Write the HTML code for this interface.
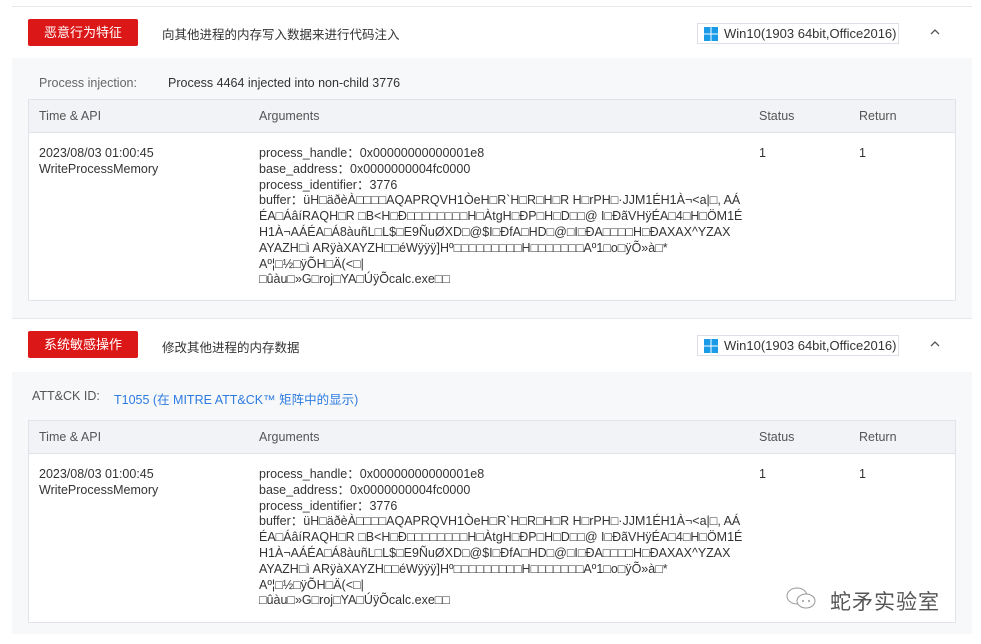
<!DOCTYPE html>
<html><head><meta charset="utf-8"><style>
*{margin:0;padding:0;box-sizing:border-box}
body{width:981px;height:644px;background:#fff;font-family:"Liberation Sans","Noto Sans CJK SC",sans-serif;color:#333;font-size:12.5px;position:relative;overflow:hidden}
.abs{position:absolute}
.line{position:absolute;left:12px;width:960px;height:1px;background:#e6e8ec}
.btn{position:absolute;left:28px;width:110px;height:27px;background:#dc1717;color:#fff;font-size:13px;text-align:center;line-height:27px;border-radius:2px}
.desc{position:absolute;left:162px;font-size:12.5px;color:#333}
.win{position:absolute;left:697px;width:202px;height:21px;border:1px solid #dcdfe6;font-size:13px;line-height:19px;padding-left:26px;color:#333}
.win svg{position:absolute;left:6px;top:3px}
.chev{position:absolute;left:930px;width:10px;height:10px}
.gray{position:absolute;left:12px;width:960px;background:#f7f8fa}
.tbl{position:absolute;left:28px;width:928px;background:#fff;border:1px solid #e1e3e8}
.th{height:33px;background:#f2f3f7;border-bottom:1px solid #e1e3e8;position:relative;color:#555}
.th span,.td span{position:absolute}
.th span{top:9px}
.td{position:relative}
.args{line-height:15.8px;white-space:pre}
.b{font-family:"DejaVu Sans",sans-serif;font-size:9px;letter-spacing:-0.5px}
</style></head><body>
<div class="line" style="top:6px"></div>

<div class="btn" style="top:19px">恶意行为特征</div>
<div class="desc" style="top:24px">向其他进程的内存写入数据来进行代码注入</div>
<div class="win" style="top:23px"><svg width="14" height="14" viewBox="0 0 14 14"><rect x="0" y="0" width="6.5" height="6.5" fill="#1a9be8"/><rect x="7.5" y="0" width="6.5" height="6.5" fill="#1a9be8"/><rect x="0" y="7.5" width="6.5" height="6.5" fill="#1a9be8"/><rect x="7.5" y="7.5" width="6.5" height="6.5" fill="#1a9be8"/></svg>Win10(1903 64bit,Office2016)</div>
<svg class="chev" style="top:27px" viewBox="0 0 10 10"><path d="M1 7 L5 3 L9 7" stroke="#555" stroke-width="1.3" fill="none"/></svg>

<div class="gray" style="top:58px;height:260px"></div>
<div class="abs" style="left:39px;top:76px;color:#666">Process injection:</div>
<div class="abs" style="left:168px;top:76px;color:#333">Process 4464 injected into non-child 3776</div>
<div class="tbl" style="top:99px;height:202px">
<div class="th"><span style="left:10px">Time &amp; API</span><span style="left:230px">Arguments</span><span style="left:730px">Status</span><span style="left:830px">Return</span></div>
<div class="td"><span style="left:10px;top:13px;line-height:15.8px">2023/08/03 01:00:45<br>WriteProcessMemory</span><span class="args" style="left:230px;top:13px">process_handle：0x00000000000001e8
base_address：0x0000000004fc0000
process_identifier：3776
buffer：üH□äðèÀ□□□□AQAPRQVH1ÒeH□R`H□R□H□R H□rPH□·JJM1ÉH1À¬&lt;a|□, AÁ
ÉA□ÁâíRAQH□R □B&lt;H□Ð□□□□□□□□H□ÀtgH□ÐP□H□D□□@ I□ÐãVHÿÉA□4□H□ÖM1É
H1À¬AÁÉA□Á8àuñL□L$□E9ÑuØXD□@$I□ÐfA□HD□@□I□ÐA□□□□H□ÐAXAX^YZAX
AYAZH□ì ARÿàXAYZH□□éWÿÿÿ]Hº□□□□□□□□□H□□□□□□□Aº1□o□ÿÕ»à□*
Aº¦□½□ÿÕH□Ä(&lt;□|
□ûàu□»G□roj□YA□ÚÿÕcalc.exe□□</span><span style="left:730px;top:13px">1</span><span style="left:830px;top:13px">1</span></div>
</div>

<div class="line" style="top:318px"></div>
<div class="btn" style="top:331px">系统敏感操作</div>
<div class="desc" style="top:337px">修改其他进程的内存数据</div>
<div class="win" style="top:335px"><svg width="14" height="14" viewBox="0 0 14 14"><rect x="0" y="0" width="6.5" height="6.5" fill="#1a9be8"/><rect x="7.5" y="0" width="6.5" height="6.5" fill="#1a9be8"/><rect x="0" y="7.5" width="6.5" height="6.5" fill="#1a9be8"/><rect x="7.5" y="7.5" width="6.5" height="6.5" fill="#1a9be8"/></svg>Win10(1903 64bit,Office2016)</div>
<svg class="chev" style="top:339px" viewBox="0 0 10 10"><path d="M1 7 L5 3 L9 7" stroke="#555" stroke-width="1.3" fill="none"/></svg>

<div class="gray" style="top:372px;height:262px"></div>
<div class="abs" style="left:32px;top:389px;color:#555">ATT&amp;CK ID:</div>
<div class="abs" style="left:114px;top:389px;color:#2d7be0">T1055 (在 MITRE ATT&amp;CK™ 矩阵中的显示)</div>
<div class="tbl" style="top:420px;height:203px">
<div class="th"><span style="left:10px">Time &amp; API</span><span style="left:230px">Arguments</span><span style="left:730px">Status</span><span style="left:830px">Return</span></div>
<div class="td"><span style="left:10px;top:13px;line-height:15.8px">2023/08/03 01:00:45<br>WriteProcessMemory</span><span class="args" style="left:230px;top:13px">process_handle：0x00000000000001e8
base_address：0x0000000004fc0000
process_identifier：3776
buffer：üH□äðèÀ□□□□AQAPRQVH1ÒeH□R`H□R□H□R H□rPH□·JJM1ÉH1À¬&lt;a|□, AÁ
ÉA□ÁâíRAQH□R □B&lt;H□Ð□□□□□□□□H□ÀtgH□ÐP□H□D□□@ I□ÐãVHÿÉA□4□H□ÖM1É
H1À¬AÁÉA□Á8àuñL□L$□E9ÑuØXD□@$I□ÐfA□HD□@□I□ÐA□□□□H□ÐAXAX^YZAX
AYAZH□ì ARÿàXAYZH□□éWÿÿÿ]Hº□□□□□□□□□H□□□□□□□Aº1□o□ÿÕ»à□*
Aº¦□½□ÿÕH□Ä(&lt;□|
□ûàu□»G□roj□YA□ÚÿÕcalc.exe□□</span><span style="left:730px;top:13px">1</span><span style="left:830px;top:13px">1</span></div>
</div>
<div class="abs" style="left:785px;top:586px;width:34px;height:26px">
<svg width="34" height="26" viewBox="0 0 34 26"><ellipse cx="12" cy="10" rx="10" ry="8" fill="#fff" stroke="#999"/><ellipse cx="21" cy="15" rx="9" ry="7" fill="#fff" stroke="#999"/><circle cx="18" cy="15" r="1" fill="#999"/><circle cx="24" cy="15" r="1" fill="#999"/></svg></div>
<div class="abs" style="left:830px;top:586px;font-size:21px;color:#555;letter-spacing:1px">蛇矛实验室</div>
</body></html>
